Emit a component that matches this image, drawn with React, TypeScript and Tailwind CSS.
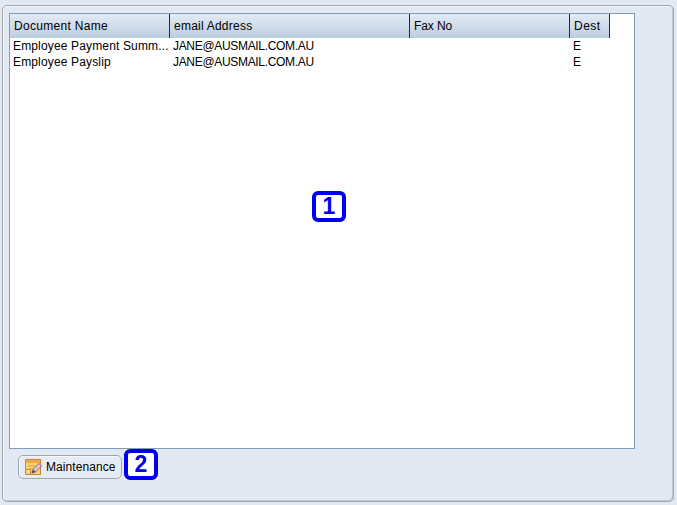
const rows = [
  { name: "Employee Payment Summ...", email: "JANE@AUSMAIL.COM.AU", fax: "", dest: "E" },
  { name: "Employee Payslip", email: "JANE@AUSMAIL.COM.AU", fax: "", dest: "E" },
];

const cols = [
  { label: "Document Name", w: "w-[160px] tracking-[0.3px]" },
  { label: "email Address", w: "w-[240px] tracking-[0.23px]" },
  { label: "Fax No", w: "w-[160px] tracking-[-0.1px]" },
  { label: "Dest", w: "w-[40px] tracking-[0.5px]" },
];

function Badge({ n, className }: { n: string; className: string }) {
  return (
    <div className={`absolute h-[31px] w-[34px] bg-white ${className}`}>
      <div className="flex h-full w-full items-center justify-center rounded-[6px] border-[4px] border-[#0000f0] bg-white text-[23px] leading-none font-bold text-[#0000f0]">
        {n}
      </div>
    </div>
  );
}

function NoteIcon() {
  return (
    <svg width="17" height="16" viewBox="0 0 17 16" className="shrink-0">
      <rect x="0.5" y="0.5" width="15" height="15" fill="#f9d271" stroke="#c98a32" />
      <rect x="1" y="1" width="14" height="3" fill="#eeaa45" />
      <path d="M3 7h10M3 10h6" stroke="#dd9f3f" strokeWidth="1" />
      <path d="M1 10.5h4.5v4.5" fill="#fde9ae" stroke="#c98a32" strokeWidth="1" />
      <path d="M7 14l1-3.500 6-6 2.500 2.500-6 6z" fill="#d8c8d8" stroke="#6e5a6e" strokeWidth="0.8" />
      <path d="M7 14l1-3.500 2.500 2.500z" fill="#5a4632" />
      <path d="M13.500 5l2.500 2.500 1-1-2.500-2.500z" fill="#e878a8" />
    </svg>
  );
}

export default function App() {
  return (
    <div className="relative h-[505px] w-[677px] overflow-hidden bg-[#e2e9f3] pt-[5px] pl-[2px] font-['Liberation_Sans',Arial,sans-serif] text-[12px] text-black">
      <div className="flex h-[497px] w-[672px] flex-col items-start rounded-[5px] border border-[#a2a5aa] pt-[7px] pl-[6px] shadow-[inset_1px_1px_0_#f6f8fb,inset_-1px_-1px_0_#c4c8ce]">
        <div className="h-[436px] w-[626px] border border-[#7f9db9] bg-white">
          <div className="flex h-[24px]">
            {cols.map((c) => (
              <div
                key={c.label}
                className={`${c.w} flex items-center border-r border-[#1c2a3a] bg-gradient-to-b from-[#e3ebf5] to-[#bccde0] pl-[4px] pb-[1px] text-black`}
              >
                {c.label}
              </div>
            ))}
          </div>
          <div>
            {rows.map((r) => (
              <div key={r.name} className="flex h-[16px] items-center">
                <div className="w-[160px] pl-[3px] tracking-[0.15px] whitespace-nowrap">{r.name}</div>
                <div className="w-[240px] pl-[3px] tracking-[-0.32px]">{r.email}</div>
                <div className="w-[160px] pl-[3px]">{r.fax}</div>
                <div className="w-[40px] pl-[3px]">{r.dest}</div>
              </div>
            ))}
          </div>
        </div>
        <button className="mt-[6px] ml-[9px] flex h-[24px] w-[104px] items-center gap-[4px] rounded-[5px] border border-[#a3a7ad] bg-[#e6ecf5] pl-[6px] tracking-[0.08px] shadow-[inset_1px_1px_0_#f6f8fb]">
          <NoteIcon />
          <span>Maintenance</span>
        </button>
      </div>
      <Badge n="1" className="top-[191px] left-[312px]" />
      <Badge n="2" className="top-[449px] left-[124px]" />
    </div>
  );
}
